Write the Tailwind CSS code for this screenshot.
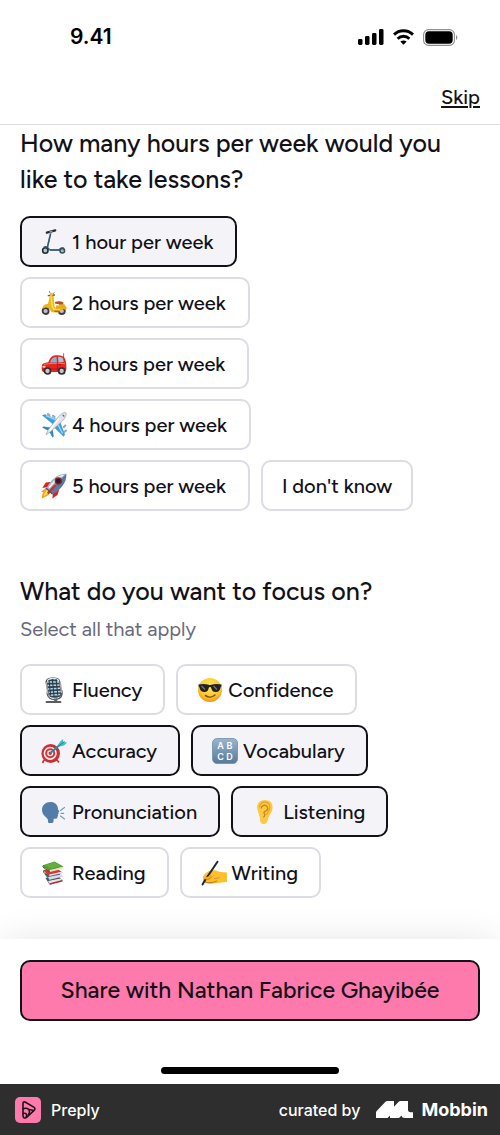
<!DOCTYPE html>
<html lang="en">
<head>
    <meta charset="UTF-8">
    <meta name="viewport" content="width=device-width, initial-scale=1.0">
    <title>Preply - Lesson preferences</title>
    <script src="https://cdn.jsdelivr.net/npm/@tailwindcss/browser@4"></script>
</head>
<body class="bg-white text-[#121117] font-['Figtree','Inter',sans-serif]">
    <div class="min-h-screen flex flex-col">
        <!-- Status bar -->
        <div class="flex items-center justify-between h-[74px] pl-[70px] pr-[42px] text-black">
            <span class="font-['Inter',sans-serif] text-[21px] font-semibold">9.41</span>
            <div class="flex items-center gap-[9px]">
                <svg class="w-[26px] h-[16px]" viewBox="0 0 26 16" fill="currentColor" aria-hidden="true">
                    <rect x="0" y="10" width="4.5" height="6" rx="1.4"/>
                    <rect x="7" y="7" width="4.5" height="9" rx="1.4"/>
                    <rect x="14" y="4" width="4.5" height="12" rx="1.4"/>
                    <rect x="21" y="0" width="4.5" height="16" rx="1.4"/>
                </svg>
                <svg class="w-[21px] h-[16px]" viewBox="0 0 21 16" fill="none" stroke="currentColor" stroke-width="2.9" aria-hidden="true">
                    <path d="M1 5.600C6.300.4 14.700.4 20 5.600M4.600 9.700c3.400-3.200 8.400-3.200 11.800 0"/>
                    <path d="M10.500 15.700 7.300 12.500c1.900-1.500 4.500-1.500 6.400 0Z" fill="currentColor" stroke="none"/>
                </svg>
                <svg class="w-[35px] h-[17px]" viewBox="0 0 35 17" aria-hidden="true">
                    <rect x=".6" y=".6" width="30.8" height="15.8" rx="5" fill="none" stroke="#8f8f8f" stroke-width="1.1"/>
                    <rect x="2.300" y="2.300" width="27.400" height="12.400" rx="3.600" fill="#000"/>
                    <path d="M33 6c1.800.7 1.800 4.300 0 5Z" fill="#8f8f8f"/>
                </svg>
            </div>
        </div>

        <!-- Header -->
        <header class="flex items-center justify-end h-[51px] px-5 pb-1 border-b border-[#dcdce0]">
            <a href="#" class="text-[20px] leading-6 font-medium underline underline-offset-2 decoration-2">Skip</a>
        </header>

        <main class="flex-1 px-5 pb-10">
            <!-- Hours per week -->
            <section>
                <h2 id="hours-title" class="text-[25px] leading-9 font-medium">How many hours per week would you like to take lessons?</h2>
                <div role="radiogroup" aria-labelledby="hours-title" class="mt-[19px] flex flex-col items-start gap-[10px]">
                    <label class="flex items-center gap-[5px] h-[51px] pl-[19px] pr-[22px] border-2 border-[#dcdce5] rounded-[10px] text-[20px] font-medium has-checked:border-[#121117] has-checked:bg-[#f4f4f8]">
                        <input type="radio" name="hours" class="sr-only" checked>
                        <svg class="w-[26px] h-[26px]" viewBox="0 0 26 26" fill="none" aria-hidden="true">
                            <path d="M10 3 6 19.500l3 1.500h12" stroke="#6e93a8" stroke-width="1.600"/>
                            <path d="M9.500 5 6.500 18" stroke="#31566d" stroke-width="1.300"/>
                            <path d="M5.800 3.600 14.300 1.400" stroke="#242a31" stroke-width="2.200" stroke-linecap="round"/>
                            <path d="m8.500 3 3-.7" stroke="#879aa7" stroke-width="1.700"/>
                            <path d="M9 21h9.500c1-2.200 3.200-2.600 4.500-1.200" stroke="#416b83" stroke-width="1.900"/>
                            <circle cx="4.300" cy="21.500" r="2.700" fill="#b8c2c9" stroke="#252c34" stroke-width="1.600"/>
                            <circle cx="21.300" cy="21.700" r="2.300" fill="#aab7c1" stroke="#384b5b" stroke-width="1.500"/>
                            <path d="M2.800 18.300c2-1.300 4.500-.2 5.500 2.500" stroke="#315267" stroke-width="1.400"/>
                        </svg>
                        <span>1 hour per week</span>
                    </label>
                    <label class="flex items-center gap-[5px] h-[51px] pl-[19px] pr-[22px] border-2 border-[#dcdce5] rounded-[10px] text-[20px] font-medium has-checked:border-[#121117] has-checked:bg-[#f4f4f8]">
                        <input type="radio" name="hours" class="sr-only">
                        <svg class="w-[26px] h-[26px]" viewBox="0 0 26 26" fill="none" aria-hidden="true">
                            <circle cx="4.600" cy="21" r="3" fill="#bfc2c6" stroke="#3d3d42" stroke-width="1.800"/>
                            <circle cx="20.800" cy="21" r="3" fill="#bfc2c6" stroke="#3d3d42" stroke-width="1.800"/>
                            <path d="M9 4.500 12.500 5l1 11.200c1 2.300 2.800 2 3.800.2.700-2.100 1.800-3.200 3.800-3.200 2.600.2 4 2.500 3.900 6.300-2.800-1.300-5.300-.5-6.800 3l-7.700-.3-1.800-3.200C6.800 16.700 3.300 17 1.300 19c.2-3.300 2.300-5 5.700-5.200Z" fill="#efb51c"/>
                            <path d="m10 6 1 8c.2 3 1 5 3 5.500h5" stroke="#ffdf54" stroke-width="1.600"/>
                            <path d="M15 17h7c1.500.2 2.400 1 2.700 2" stroke="#e9ac18" stroke-width="3"/>
                            <path d="m13.500 21.300 5.200.3" stroke="#a66b13" stroke-width="1.500"/>
                            <path d="M14 12c3-1.300 6-1 8.500.4l-.5 1.800c-3 .5-6 .2-8-.6Z" fill="#ad5524"/>
                            <path d="M7.300 5.700 13.500 5" stroke="#585859" stroke-width="1.300" stroke-linecap="round"/>
                            <circle cx="10.300" cy="4.500" r="1.700" fill="#efc138"/>
                            <path d="m9 3-.6-2M12 4l1.400-1.700" stroke="#8c8c87" stroke-width="1"/>
                        </svg>
                        <span>2 hours per week</span>
                    </label>
                    <label class="flex items-center gap-[5px] h-[51px] pl-[19px] pr-[22px] border-2 border-[#dcdce5] rounded-[10px] text-[20px] font-medium has-checked:border-[#121117] has-checked:bg-[#f4f4f8]">
                        <input type="radio" name="hours" class="sr-only">
                        <svg class="w-[26px] h-[26px]" viewBox="0 0 26 26" fill="none" aria-hidden="true">
                            <path d="M.8 15.500c0-2.500 1.700-3.700 6.500-4.200C9 6.800 10.500 4.500 15 4.200c4.500-.3 7.400.6 8.500 2.500 1.400 2.500 2 6 1.900 11.300-.1 2-1.300 3-3 3H3.500C1 21 .5 19.600.8 15.500Z" fill="#e52520"/>
                            <path d="M9 11.400C10.300 7.800 12 6 15.500 5.800l.4 5.600Z" fill="#7cb5ce"/>
                            <path d="m17 5.800 3.700.5c1.200.8 1.800 2.600 2 4.800L17.500 11.500Z" fill="#a3c8d5"/>
                            <path d="M3 13.400c6-1.100 13-1.300 21-.8" stroke="#ff7865" stroke-width="1"/>
                            <path d="M16.400 11.500v8.500M1.200 18h23.600" stroke="#a91519" stroke-width=".8"/>
                            <path d="m22.500 6 .2-3.800" stroke="#6a3538" stroke-width=".7"/>
                            <ellipse cx="3" cy="15.700" rx="1.700" ry="1" fill="#ffd6b6"/>
                            <circle cx="6.500" cy="20" r="3" fill="#c8c8c8" stroke="#302f33" stroke-width="1.700"/>
                            <circle cx="20.700" cy="20" r="3" fill="#c8c8c8" stroke="#302f33" stroke-width="1.700"/>
                            <path d="M17.800 13.700h2" stroke="#801417" stroke-width="1"/>
                        </svg>
                        <span>3 hours per week</span>
                    </label>
                    <label class="flex items-center gap-[5px] h-[51px] pl-[19px] pr-[22px] border-2 border-[#dcdce5] rounded-[10px] text-[20px] font-medium has-checked:border-[#121117] has-checked:bg-[#f4f4f8]">
                        <input type="radio" name="hours" class="sr-only">
                        <svg class="w-[26px] h-[26px]" viewBox="0 0 26 26" fill="none" aria-hidden="true">
                            <path d="m1 3.300 3-1 13.500 5.500L14 14ZM18.500 8l5.500 14.500-1.300 2.300L11 13.500Z" fill="#3d9fd9"/>
                            <path d="m5 3.700 11.500 5M21.500 21.500 16.700 12" stroke="#9ed9f2" stroke-width="1.400"/>
                            <path d="m1 15.400 1.500-.8 7 .8 2.200 2 1 7-1.300 1L8 19Z" fill="#2988c5"/>
                            <path d="M25 1c1 1.500-.8 5.200-3.700 8.100L9.500 19.800 5 22.700l2-4.400L17.300 4.800C20.500 1.500 23.700-.5 25 1Z" fill="#e1e5e9" stroke="#9ca6ad" stroke-width=".7"/>
                            <path d="M18 6.500 8.500 18.500" stroke="#fff" stroke-width="1.700"/>
                            <path d="m7 2 1.400 1.200M12 3.700l1.500 1.200M24.300 13.500 22.900 15M25 18.600 23.300 20" stroke="#8fa9b8" stroke-width="2" stroke-linecap="round"/>
                            <path d="m21.700 2.900 1.600 1.600" stroke="#50687b" stroke-width="1.200"/>
                        </svg>
                        <span>4 hours per week</span>
                    </label>
                    <div class="flex flex-wrap gap-[11px]">
                        <label class="flex items-center gap-[5px] h-[51px] pl-[19px] pr-[22px] border-2 border-[#dcdce5] rounded-[10px] text-[20px] font-medium has-checked:border-[#121117] has-checked:bg-[#f4f4f8]">
                            <input type="radio" name="hours" class="sr-only">
                            <svg class="w-[26px] h-[26px]" viewBox="0 0 26 26" fill="none" aria-hidden="true">
                                <path d="m5.500 14.500 3.200 6.200C7 23 4.500 23.500.7 25.700c.3-3 .6-5.300 1.800-6.500-.8 0-1.500-.2-2.300-.5Z" fill="#ff9b20"/>
                                <path d="m6.500 16 1.700 3.500c-1.500 1.500-3 1.700-5.500 3.700.7-2.400 1.500-4.300 3.800-7.200Z" fill="#ffeb57"/>
                                <path d="M11.500 8.800 4.800 9.500 1.300 15l5.800-1ZM18.500 15.500l-2 6.500-5.200 3.400.7-6Z" fill="#d9221d"/>
                                <path d="M25.300.8c.2 5-1.200 9-4.800 13.200-2.500 2.800-5.500 5-9.200 7L5.500 15.500c1.500-3.800 4-7 7-9.700C16.300 2.300 20.300.8 25.300.8Z" fill="#a2b6c9"/>
                                <path d="M25.300.8c.2 5-1.200 9-4.800 13.200-2.500 2.800-5.500 5-9.200 7L9 18.700 22 4Z" fill="#5878a6"/>
                                <path d="m8 14.800 7-8.300c2-2 4.400-3.400 7.300-4.200" stroke="#eef4f6" stroke-width="1.600"/>
                                <circle cx="17.300" cy="8" r="3" fill="#291c22" stroke="#8b2525" stroke-width="1.300"/>
                                <path d="m7.500 19.700 6.500-7.200" stroke="#d92b20" stroke-width="2.500" stroke-linecap="round"/>
                                <path d="m5 15 6.500 6.300" stroke="#52525e" stroke-width="1.200"/>
                            </svg>
                            <span>5 hours per week</span>
                        </label>
                        <label class="flex items-center h-[51px] px-[19px] border-2 border-[#dcdce5] rounded-[10px] text-[20px] font-medium has-checked:border-[#121117] has-checked:bg-[#f4f4f8]">
                            <input type="radio" name="hours" class="sr-only">
                            <span>I don't know</span>
                        </label>
                    </div>
                </div>
            </section>

            <!-- Focus areas -->
            <section class="mt-[62px]">
                <h2 id="focus-title" class="text-[25px] leading-9 font-medium">What do you want to focus on?</h2>
                <p class="mt-[6px] text-[20px] leading-7 text-[#6a697c]">Select all that apply</p>
                <div role="group" aria-labelledby="focus-title" class="mt-[21px] flex flex-wrap gap-x-[11px] gap-y-[10px]">
                    <label class="flex items-center gap-[5px] h-[51px] pl-[19px] pr-[21px] border-2 border-[#dcdce5] rounded-[10px] text-[20px] font-medium has-checked:border-[#121117] has-checked:bg-[#f4f4f8]">
                        <input type="checkbox" class="sr-only">
                        <svg class="w-[26px] h-[26px]" viewBox="0 0 26 26" fill="none" aria-hidden="true">
                            <path d="M6 15.500C6.500 21 10 23 15 22.500c5-.6 6.800-4 5.800-9" stroke="#595d60" stroke-width="1.500"/>
                            <path d="M4.500 5.500C4.500 1.500 8 .5 12 .5c4.500 0 7 1.200 7.500 5l1.200 10c.3 3.500-2 5-6.200 5.300-4.300.4-6.900-.8-7.500-4.500Z" fill="#344656"/>
                            <path d="M6 5h12M6.600 8.500l12-.6M7 12l12-.7M7.700 15.200l12-.8M8.500 18.200l10.700-.7" stroke="#b7dbea" stroke-width="1.500"/>
                            <path d="M6.500 4.500c.2-2 2-3 5.500-3s5.300.8 6 3" stroke="#dce9ef" stroke-width="1.500"/>
                            <path d="m11.300 2 1.800 17.500M8 3l1.700 15.700M15 2l1.800 16.300" stroke="#263542" stroke-width="1"/>
                            <path d="m5.200 5 1.600 12M19.200 5l1.500 11" stroke="#aaa" stroke-width="1.500"/>
                            <path d="m14.500 21.500.3 3" stroke="#64686b" stroke-width="3"/>
                            <path d="M5.500 25h14" stroke="#5a5c5e" stroke-width="1.800" stroke-linecap="round"/>
                        </svg>
                        <span>Fluency</span>
                    </label>
                    <label class="flex items-center gap-[5px] h-[51px] pl-[19px] pr-[21px] border-2 border-[#dcdce5] rounded-[10px] text-[20px] font-medium has-checked:border-[#121117] has-checked:bg-[#f4f4f8]">
                        <input type="checkbox" class="sr-only">
                        <svg class="w-[26px] h-[26px]" viewBox="0 0 26 26" fill="none" aria-hidden="true">
                            <defs>
                                <radialGradient id="face" cx=".5" cy=".35" r=".65">
                                    <stop offset="0" stop-color="#ffeb58"/>
                                    <stop offset=".7" stop-color="#fbc62d"/>
                                    <stop offset="1" stop-color="#ed9420"/>
                                </radialGradient>
                            </defs>
                            <circle cx="13" cy="13" r="12" fill="url(#face)"/>
                            <path d="M1.400 7.500c3.600-.9 7.600-.8 10.300.3.900.3 1.700.3 2.600 0 2.700-1.100 6.700-1.200 10.300-.3l-.2 2c-.7.3-.8.8-1 1.600-.7 2.800-2 4-4.700 3.900-2.800 0-4-1.500-4.600-4.500-.3-.8-1.900-.8-2.200 0-.6 3-1.800 4.500-4.600 4.500-2.700 0-4-1.100-4.700-3.900-.2-.8-.3-1.300-1-1.600Z" fill="#222126"/>
                            <path d="m4.500 9 3.500 3.500M16.500 9l3.500 3.500" stroke="#75747a" stroke-width="1.200"/>
                            <path d="M8.500 18.500c2.800 2.200 6.700 2 9.500-.5" stroke="#885019" stroke-width="1.600" stroke-linecap="round"/>
                        </svg>
                        <span>Confidence</span>
                    </label>
                    <label class="flex items-center gap-[5px] h-[51px] pl-[19px] pr-[21px] border-2 border-[#dcdce5] rounded-[10px] text-[20px] font-medium has-checked:border-[#121117] has-checked:bg-[#f4f4f8]">
                        <input type="checkbox" class="sr-only" checked>
                        <svg class="w-[26px] h-[26px]" viewBox="0 0 26 26" fill="none" aria-hidden="true">
                            <path d="m3 22-1.500 3M16 22l2 2.500" stroke="#a64b32" stroke-width="1.700"/>
                            <ellipse cx="9.700" cy="15.500" rx="9.300" ry="9.500" fill="#cf2d35"/>
                            <circle cx="9.200" cy="15.300" r="5.800" fill="#d73239" stroke="#fff1ed" stroke-width="1.600"/>
                            <circle cx="9.200" cy="15.300" r="2.400" stroke="#fff1ed" stroke-width="1.300"/>
                            <path d="m9.500 15 9-8" stroke="#308b97" stroke-width="1.700"/>
                            <path d="m16.500 7.500 2.700-4 3-2.500v3l4 .5-3.400 3-4.800 1.300Z" fill="#42bdca"/>
                            <path d="m17 8.500 6.500-5" stroke="#23859b" stroke-width="1"/>
                        </svg>
                        <span>Accuracy</span>
                    </label>
                    <label class="flex items-center gap-[5px] h-[51px] pl-[19px] pr-[21px] border-2 border-[#dcdce5] rounded-[10px] text-[20px] font-medium has-checked:border-[#121117] has-checked:bg-[#f4f4f8]">
                        <input type="checkbox" class="sr-only" checked>
                        <svg class="w-[26px] h-[26px]" viewBox="0 0 26 26" aria-hidden="true">
                            <defs>
                                <linearGradient id="tile" x2="0" y2="1">
                                    <stop offset="0" stop-color="#9bb5ce"/>
                                    <stop offset="1" stop-color="#57799a"/>
                                </linearGradient>
                            </defs>
                            <rect x=".5" y=".5" width="25" height="25" rx="4.500" fill="url(#tile)" stroke="#6e8faa" stroke-width=".8"/>
                            <g fill="#fff" font-family="Inter, sans-serif" font-size="9" font-weight="600" text-anchor="middle">
                                <text x="8.500" y="11">A</text>
                                <text x="17.500" y="11">B</text>
                                <text x="8.500" y="22">C</text>
                                <text x="17.500" y="22">D</text>
                            </g>
                        </svg>
                        <span>Vocabulary</span>
                    </label>
                    <label class="flex items-center gap-[5px] h-[51px] pl-[19px] pr-[21px] border-2 border-[#dcdce5] rounded-[10px] text-[20px] font-medium has-checked:border-[#121117] has-checked:bg-[#f4f4f8]">
                        <input type="checkbox" class="sr-only" checked>
                        <svg class="w-[26px] h-[26px]" viewBox="0 0 26 26" fill="none" aria-hidden="true">
                            <path d="M7 23.500c.5-2.500-.2-4-2.300-5.500C2.500 16.200 1 14 1 11 1 6 4.700 3 9.500 3c4.300 0 7 2.500 7.500 6.300-.2 1 .1 1.500.8 2.200.8.800.7 1.300-.3 1.600l.2 1.500-1 .7.500.8-.7 1.700c.2 1.500-.9 2.300-3.800 2l-.4 3.700c-1.600.8-3.800.8-5.300 0Z" fill="#527da8"/>
                            <path d="m19.500 11.500 4-3M20 14.300h2.700M19.500 17l4 3" stroke="#7899b7" stroke-width="1.200" stroke-linecap="round"/>
                        </svg>
                        <span>Pronunciation</span>
                    </label>
                    <label class="flex items-center gap-[5px] h-[51px] pl-[19px] pr-[21px] border-2 border-[#dcdce5] rounded-[10px] text-[20px] font-medium has-checked:border-[#121117] has-checked:bg-[#f4f4f8]">
                        <input type="checkbox" class="sr-only" checked>
                        <svg class="w-[26px] h-[26px]" viewBox="0 0 26 26" fill="none" aria-hidden="true">
                            <path d="M5.500 11C3.800 5 7.500 1 13 1c5.300 0 8.200 3.500 7.500 8.500-.4 3.500-2 4.800-3.300 7.500-1.300 3-1.500 6.500-4 7.700-2.600 1.200-5-.5-5.200-3.700C8 17 6.500 15 5.500 11Z" fill="#fcc944"/>
                            <path d="M7.500 8.300C8 4.500 10.300 3 13.300 3.200c3.600.2 5 2.800 4.500 5.800-.4 3.200-2.400 4.600-3.600 7" stroke="#e5a32b" stroke-width="1.200"/>
                            <path d="M9 9.500c.8-2.800 3-4 5.200-2.700 2.400 1.500 1.700 4.200-.4 5.200-2 .8-2.300 1.800-1.300 3 .8 1.200.3 2.800-1.300 3" stroke="#c98319" stroke-width="1.300"/>
                        </svg>
                        <span>Listening</span>
                    </label>
                    <label class="flex items-center gap-[5px] h-[51px] pl-[19px] pr-[21px] border-2 border-[#dcdce5] rounded-[10px] text-[20px] font-medium has-checked:border-[#121117] has-checked:bg-[#f4f4f8]">
                        <input type="checkbox" class="sr-only">
                        <svg class="w-[26px] h-[26px]" viewBox="0 0 26 26" fill="none" aria-hidden="true">
                            <path d="m4.500 18 12.500-2 5 4.500-13.500 4Z" fill="#4d4c54"/>
                            <path d="m7 21 12.500-2.600 2.500 2-13.500 3.300Z" fill="#e6e6e6"/>
                            <path d="m8.800 24 12.500-3.300" stroke="#b92430" stroke-width="1.500"/>
                            <path d="m3.500 14 13-2 5 4.500L8 20.500Z" fill="#3970a4"/>
                            <path d="m7 17 13.500-2.500 1.500 2-13.500 3.200Z" fill="#d9dde3"/>
                            <path d="m2 10 13-2 7 4.700L8 16.500Z" fill="#d93539"/>
                            <path d="m8 14.500 13.500-3 .5 1.300-13.500 3.200Z" fill="#f5e2dc"/>
                            <path d="m2.500 5 11-3.500 9 5L9 10.500 2.500 7.500Z" fill="#4e9e31"/>
                            <path d="m3.500 5.300 10-3 6.500 3.800-10 2.700Z" fill="#68ad40"/>
                            <path d="m8.500 10 13-3 .5 1.700L9 12Z" fill="#dbe2c9"/>
                            <path d="m2.500 5-.7 2 7 5M3 10.500l-.5 1.800 5.500 4" stroke="#2d6628" stroke-width="1"/>
                        </svg>
                        <span>Reading</span>
                    </label>
                    <label class="flex items-center gap-[5px] h-[51px] pl-[19px] pr-[21px] border-2 border-[#dcdce5] rounded-[10px] text-[20px] font-medium has-checked:border-[#121117] has-checked:bg-[#f4f4f8]">
                        <input type="checkbox" class="sr-only">
                        <svg class="w-[26px] h-[26px]" viewBox="0 0 26 26" fill="none" aria-hidden="true">
                            <path d="M2 16.500c2-3.500 5.500-6 9.500-6.500 2.500-.2 4.300 1 7 1.700 2.500.5 4.800.4 7.500.8V22c-5.500.2-9 1-13.500 1.500-4.500.5-8 0-10.500-2Z" fill="#fbc02d"/>
                            <path d="M3 21.500c4 1.800 9 1.300 13-.5" stroke="#c77e16" stroke-width="1.200"/>
                            <path d="M13 18.500c2 .6 4-.8 5.500-1" stroke="#d9932a" stroke-width="1"/>
                            <path d="m1.500 24.500 3-5L16.500 1.800" stroke="#25252a" stroke-width="2" stroke-linecap="round"/>
                            <path d="M3.500 17.500c2.500 1.500 5 .3 6.500-2.200" stroke="#f2ab23" stroke-width="2.500"/>
                            <path d="M5 19c2.500 1 4.500 0 6-2.500" stroke="#c98319" stroke-width=".9"/>
                        </svg>
                        <span>Writing</span>
                    </label>
                </div>
            </section>
        </main>

        <!-- Bottom action -->
        <div class="px-5 pt-[21px] pb-[10px] bg-white shadow-[0_0_36px_-4px_rgba(0,0,0,0.12)]">
            <button type="button" class="w-full h-[61px] border-2 border-[#121117] rounded-[10px] bg-[#ff7aac] text-[23px] font-medium">Share with Nathan Fabrice Ghayibée</button>
            <div class="mt-[46px] mx-auto w-[178px] h-[7px] rounded-full bg-black"></div>
        </div>

        <!-- Attribution -->
        <footer class="relative flex items-center justify-between h-[51px] pl-[15px] pr-3 bg-[#2e2e2e] text-white font-['Inter',sans-serif]">
            <div class="flex items-center gap-[10px]">
                <svg class="w-[26px] h-[26px]" viewBox="0 0 26 26" fill="none" aria-hidden="true">
                    <rect width="26" height="26" rx="5" fill="#ff7aac"/>
                    <g stroke="#1b1116" stroke-width="1.600" stroke-linejoin="round">
                        <path d="M8 6.500C8 5 9.200 4.500 10.500 5.200l8.300 4.900c1.400.8 1.500 2.300.3 3.200L11.800 20.200C10 21.800 8 21 8 18.700Z"/>
                        <path d="M8 12c3.200-1.800 6.500-.3 6.500 2.800 0 1.300-.4 2.200-1.400 3.300M8 16.500c2-.8 3.700.2 3.700 1.700 0 1-.3 1.500-.8 2M14.300 12.500l4.200 1"/>
                    </g>
                </svg>
                <span class="text-[16px] font-medium">Preply</span>
            </div>
            <div class="flex items-center">
                <span class="text-[16px] font-medium">curated by</span>
                <svg class="ml-4 w-[37px] h-[17px]" viewBox="0 0 37 17" fill="currentColor" aria-hidden="true">
                    <path d="M0 17v-5.300c0-.7.200-1.200.7-1.700L9.200 1C9.800.3 10.500 0 11.400 0H18v5.700L22.400 1c.6-.7 1.300-1 2.200-1H32v8.500c0 2 .8 2.700 2.700 2.700H37V17h-8c-2 0-3.200-.8-3.500-2.500L23 17h-9v-2.500L11.500 17Z"/>
                </svg>
                <span class="ml-2 text-[18px] font-bold">Mobbin</span>
            </div>
        </footer>
    </div>
</body>
</html>
